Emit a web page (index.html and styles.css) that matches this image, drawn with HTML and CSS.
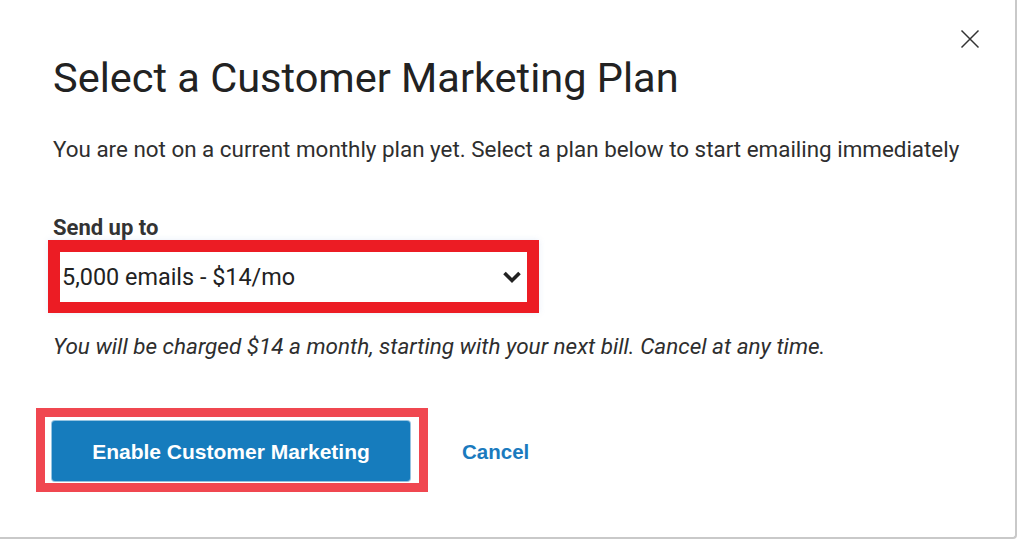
FILE: index.html
```html
<!DOCTYPE html>
<html lang="en">
<head>
<meta charset="utf-8">
<title>Select a Customer Marketing Plan</title>
<link rel="stylesheet" href="styles.css">
</head>
<body>
<div class="modal">
  <button class="close" aria-label="Close">
    <svg width="20" height="20" viewBox="0 0 20 20"><path d="M1.5 1.5 L18.5 18.5 M18.5 1.5 L1.5 18.5" stroke="#333" stroke-width="1.5" fill="none"/></svg>
  </button>
  <h1 class="title">Select a Customer Marketing Plan</h1>
  <p class="intro">You are not on a current monthly plan yet. Select a plan below to start emailing immediately</p>
  <div class="field">
    <div class="label">Send up to</div>
    <div class="select-hl">
      <div class="select">
        <span class="select-value">5,000 emails - $14/mo</span>
        <svg class="chev" width="20" height="14" viewBox="0 0 20 14"><path d="M2.5 3 L10 10.5 L17.5 3" stroke="#222" stroke-width="3.6" fill="none"/></svg>
      </div>
    </div>
  </div>
  <p class="note">You will be charged $14 a month, starting with your next bill. Cancel at any time.</p>
  <div class="actions">
    <div class="btn-hl"><button class="btn">Enable Customer Marketing</button></div>
    <a class="cancel" href="#">Cancel</a>
  </div>
</div>
</body>
</html>
```
FILE: styles.css
```css
html, body {
  margin: 0;
  padding: 0;
  background: #ffffff;
}
body {
  font-family: Roboto, "Noto Sans", sans-serif;
  color: #2b2b2b;
}
.modal {
  position: relative;
  box-sizing: border-box;
  width: 1017px;
  height: 539px;
  background: #fff;
  border-right: 2px solid #c9c9c9;
  border-bottom: 2px solid #c9c9c9;
  border-bottom-right-radius: 4px;
  padding: 54px 0 0 53px;
}
.close {
  position: absolute;
  top: 29px;
  left: 960px;
  width: 20px;
  height: 20px;
  padding: 0;
  border: 0;
  background: transparent;
  display: flex;
}
.title {
  margin: 0;
  font-size: 41.5px;
  line-height: 48px;
  font-weight: 400;
  color: #222;
}
.intro {
  margin: 34px 0 0;
  font-size: 22.4px;
  line-height: 26px;
  color: #2e2e2e;
}
.field {
  margin-top: 53px;
  display: flex;
  flex-direction: column;
}
.label {
  font-size: 22px;
  line-height: 26px;
  font-weight: 700;
  color: #333;
}
.select-hl {
  margin: -1px 0 0 -5px;
  width: 491px;
  height: 73px;
  box-sizing: border-box;
  border: 12px solid #ec1c24;
  border-bottom-width: 11px;
  background: #fff;
  box-shadow: 0 0 6px rgba(120, 160, 220, 0.18);
}
.select {
  height: 100%;
  display: flex;
  align-items: center;
  justify-content: space-between;
  padding: 0 5px 0 2px;
}
.select-value {
  font-size: 23.4px;
  line-height: 26px;
  color: #222;
}
.chev {
  display: block;
}
.note {
  margin: 20px 0 0;
  font-size: 22.5px;
  line-height: 26px;
  font-style: italic;
  color: #2e2e2e;
}
.actions {
  margin-top: 49px;
  display: flex;
  align-items: center;
  margin-left: -17px;
}
.btn-hl {
  box-sizing: border-box;
  width: 392px;
  height: 84px;
  border: 9px solid #f04750;
  background: #fff;
  padding: 4px 9px 0 7px;
}
.btn {
  display: flex;
  align-items: center;
  justify-content: center;
  width: 358px;
  height: 60px;
  border: 0;
  border-radius: 3px;
  background: #167cbd;
  box-shadow: 0 0 0 1px rgba(22, 124, 189, 0.45);
  color: #fff;
  font-family: "Liberation Sans", Arial, sans-serif;
  font-weight: 700;
  font-size: 21px;
  padding: 2px 0 0;
}
.cancel {
  margin: 4px 0 0 34px;
  font-family: "Liberation Sans", Arial, sans-serif;
  font-weight: 700;
  font-size: 20.5px;
  color: #1a7abe;
  text-decoration: none;
}
```
